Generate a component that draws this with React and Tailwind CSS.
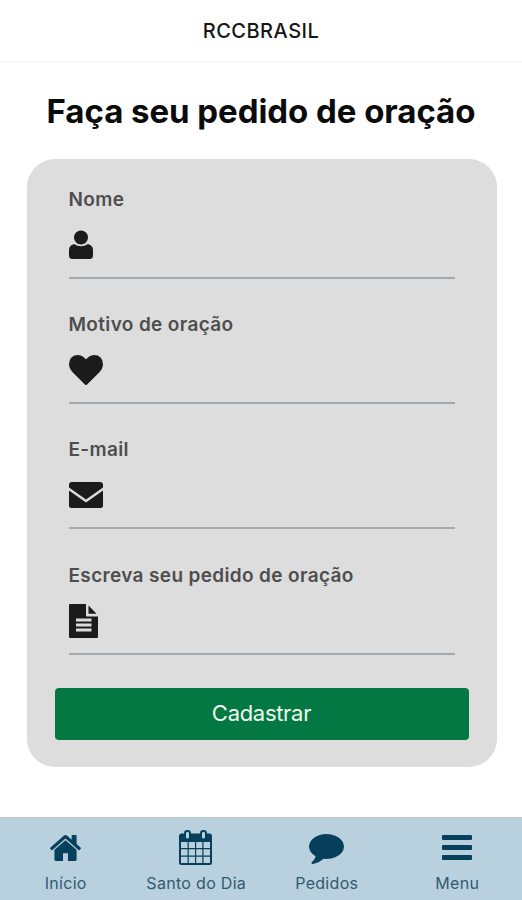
const IconUser = () => (
  <svg className="w-6 h-[30px]" viewBox="0 0 24 30" fill="currentColor">
    <circle cx="12" cy="7.500" r="7" />
    <path d="M5 14Q12 18.500 19 14Q24 15.500 24 20V25.500Q24 29 20.500 29H3.500Q0 29 0 25.500V20Q0 15.500 5 14z" />
  </svg>
);

const IconHeart = () => (
  <svg className="w-[34px] h-[30px]" viewBox="0 128 1792 1536" preserveAspectRatio="none" fill="currentColor">
    <path d="M896 1664q-26 0-44-18l-624-602q-10-8-27.500-26t-55.500-65.500-68-97.500-53.500-121-23.500-138q0-220 127-344t351-124q62 0 126.500 21.500t120 58 95.500 68.500 76 68q36-36 76-68t95.500-68.500 120-58 126.500-21.500q224 0 351 124t127 344q0 221-229 450l-623 600q-18 18-44 18z" />
  </svg>
);

const IconEnvelope = () => (
  <svg className="w-[34px] h-[26px]" viewBox="0 0 34 26" fill="currentColor">
    <path d="M3 0H31Q34 0 34 3V5.500L17 17.500L0 5.500V3Q0 0 3 0z" />
    <path d="M0 8.500L17 20.500L34 8.500V23.500Q34 26 31.500 26H2.500Q0 26 0 23.500z" />
  </svg>
);

const IconFile = () => (
  <svg className="w-[29px] h-[34px]" viewBox="0 0 29 34" fill="currentColor">
    <path
      fillRule="evenodd"
      d="M1 0H17V11.500Q17 12.500 18 12.500H29V33Q29 34 28 34H1Q0 34 0 33V1Q0 0 1 0zM7 14.500V17.500H22.500V14.500zM7 19.500V22.500H22.500V19.500zM7 24.500V27.500H22.500V24.500z"
    />
    <path d="M19.500 1.500L27.500 9.800H19.500z" />
  </svg>
);

const IconHome = () => (
  <svg className="w-[31px] h-[26px]" viewBox="90 250 1612 1290" preserveAspectRatio="none" fill="currentColor">
    <path d="M1472 992v480q0 26-19 45t-45 19h-384v-384h-256v384h-384q-26 0-45-19t-19-45v-480q0-1 .5-3t.5-3l575-474 575 474q1 2 1 6zm223-69l-62 74q-8 9-21 11h-3q-13 0-21-7l-692-577-692 577q-12 8-24 7-13-2-21-11l-62-74q-8-10-7-23.500t11-21.500l719-599q32-26 76-26t76 26l244 204v-195q0-14 9-23t23-9h192q14 0 23 9t9 23v408l219 182q10 8 11 21.500t-7 23.500z" />
  </svg>
);

const IconCalendar = () => (
  <svg className="w-[33px] h-[35px]" viewBox="0 0 33 35" fill="currentColor">
    <path
      fillRule="evenodd"
      d="M2.500 3.500H30.500Q33 3.500 33 6V32.500Q33 35 30.500 35H2.500Q0 35 0 32.500V6Q0 3.500 2.500 3.500zM2 12V18H8.600V12zM9.800 12V18H16V12zM17.200 12V18H23.300V12zM24.500 12V18H31V12zM2 19.200V25.500H8.600V19.200zM9.800 19.200V25.500H16V19.200zM17.200 19.200V25.500H23.300V19.200zM24.500 19.200V25.500H31V19.200zM2 26.700V33H8.600V26.700zM9.800 26.700V33H16V26.700zM17.200 26.700V33H23.300V26.700zM24.500 26.700V33H31V26.700z"
    />
    <rect x="6" y="1" width="5" height="8.500" rx="2.300" fill="#b9d0de" stroke="currentColor" strokeWidth="2" />
    <rect x="22" y="1" width="5" height="8.500" rx="2.300" fill="#b9d0de" stroke="currentColor" strokeWidth="2" />
  </svg>
);

const IconComment = () => (
  <svg className="w-[35px] h-[30px] mt-0.5" viewBox="0 256 1792 1540" preserveAspectRatio="none" fill="currentColor">
    <path d="M1792 896q0 174-120 321.500t-326 233-450 85.500q-70 0-145-8-198 175-460 242-49 14-114 22-17 2-30.500-9t-17.500-29v-1q-3-4-.5-12t2-10 4.500-9.500l6-9 7-8.500 8-9q7-8 31-34.500t34.500-38 31-39.500 32.500-51 27-59 26-76q-157-89-247.500-220t-90.500-281q0-130 71-248.500t191-204.500 286-136.500 348-50.500q244 0 450 85.500t326 233 120 321.500z" />
  </svg>
);

const IconMenu = () => (
  <svg className="w-[30px] h-[26px]" viewBox="0 0 30 26" fill="currentColor">
    <rect width="30" height="5" rx="1" />
    <rect y="10" width="30" height="5" rx="1" />
    <rect y="20" width="30" height="5" rx="1" />
  </svg>
);

const campos = [
  { label: "Nome", icon: <IconUser /> },
  { label: "Motivo de oração", icon: <IconHeart /> },
  { label: "E-mail", icon: <IconEnvelope /> },
  { label: "Escreva seu pedido de oração", icon: <IconFile /> },
];

const abas = [
  { label: "Início", icon: <IconHome /> },
  { label: "Santo do Dia", icon: <IconCalendar /> },
  { label: "Pedidos", icon: <IconComment /> },
  { label: "Menu", icon: <IconMenu /> },
];

const App = () => {
  return (
    <div className="h-[900px] w-full flex flex-col bg-white font-['Inter',sans-serif]">
      <header className="h-[63px] shrink-0 flex items-center justify-center border-b-2 border-[#f8f8f8]">
        <span className="text-[20px] font-medium tracking-[0.5px] text-[#161616]">RCCBRASIL</span>
      </header>

      <main className="flex-1 flex flex-col items-center">
        <h1 className="mt-7 h-10 leading-10 text-[33px] font-bold tracking-[-0.05px] text-[#0b0b0b] whitespace-nowrap">
          Faça seu pedido de oração
        </h1>

        {/* Formulário */}
        <form className="mt-7 ml-px w-[470px] h-[608px] rounded-[28px] bg-[#dddddd] px-7 pt-7">
          {campos.map((campo) => (
            <div key={campo.label} className="mx-3.5 h-[92px] mb-[33.200px] border-b-2 border-[#a3a9af]">
              <label className="block h-6 leading-[26px] text-[19px] font-semibold tracking-[0.35px] text-[#4e4e4e]">
                {campo.label}
              </label>
              <div className="h-[68px] flex items-center text-[#1b1b1b]">
                {campo.icon}
              </div>
            </div>
          ))}
          <button
            type="button"
            className="block w-full h-[52px] rounded bg-[#047842] text-[22px] tracking-[-0.3px] text-[#eef8ee]"
          >
            Cadastrar
          </button>
        </form>
      </main>

      {/* Barra de navegação */}
      <nav className="h-[83px] shrink-0 grid grid-cols-4 bg-[#b9d0de] border-t border-[#b4c6cc] text-[#07405c]">
        {abas.map((aba) => (
          <div key={aba.label} className="flex flex-col items-center pt-3">
            <div className="h-[35px] flex items-center">{aba.icon}</div>
            <span className="mt-1.5 ml-px leading-6 text-[16px] tracking-[0.3px] text-[#315b70] whitespace-nowrap">
              {aba.label}
            </span>
          </div>
        ))}
      </nav>
    </div>
  );
};

export default App;
